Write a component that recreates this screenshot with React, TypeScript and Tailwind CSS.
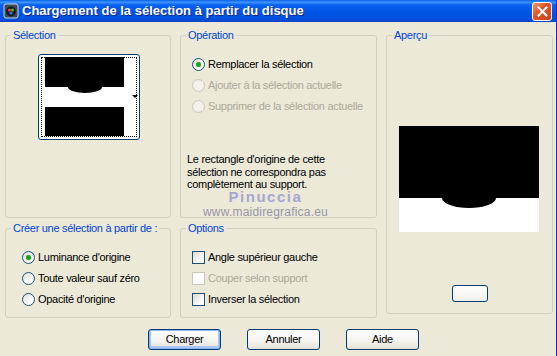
import React from "react";

const Radio: React.FC<{ checked?: boolean; disabled?: boolean; label: string }> = ({
  checked,
  disabled,
  label,
}) => (
  <div className="flex items-center h-[21px]">
    <span
      className={`w-[13px] h-[13px] rounded-full border flex items-center justify-center ${
        disabled
          ? "border-[#CAC8BB] bg-[#F2F1EA]"
          : "border-[#1C5180] bg-[linear-gradient(135deg,#DCDBD2_0%,#FFFFFF_70%)]"
      }`}
    >
      {checked && <span className="w-[5px] h-[5px] rounded-full bg-[#21A121] shadow-[0_0_1px_#5BD75B]" />}
    </span>
    <span className={`ml-[3px] ${disabled ? "text-[#ACA899]" : "text-black"}`}>{label}</span>
  </div>
);

const Check: React.FC<{ disabled?: boolean; label: string }> = ({ disabled, label }) => (
  <div className="flex items-center h-[21px]">
    <span
      className={`w-[13px] h-[13px] border ${
        disabled
          ? "border-[#CAC8BB] bg-white"
          : "border-[#1C5180] bg-[linear-gradient(135deg,#DCDBD2_0%,#FFFFFF_80%)]"
      }`}
    />
    <span className={`ml-[3px] ${disabled ? "text-[#ACA899]" : "text-black"}`}>{label}</span>
  </div>
);

const Group: React.FC<{ title: string; className?: string; children?: React.ReactNode }> = ({
  title,
  className,
  children,
}) => (
  <fieldset className={`border border-[#D0D0BF] rounded-[3px] min-w-0 ${className ?? ""}`}>
    <legend className="ml-[5px] px-[2px] text-[#0046D5] leading-[13px]">{title}</legend>
    {children}
  </fieldset>
);

const XpButton: React.FC<{ label: string; focused?: boolean }> = ({ label, focused }) => (
  <button
    className={`w-[73px] h-[21px] rounded-[3px] border border-[#003C74] bg-[linear-gradient(to_bottom,#FFFFFF_0%,#F4F3EE_60%,#E3E1D6_100%)] text-black leading-none ${
      focused ? "shadow-[inset_0_0_0_1px_#8CB4F2,inset_0_-1px_0_2px_#A9C6F5]" : ""
    }`}
  >
    {label}
  </button>
);

export default function App() {
  return (
    <div className="w-[557px] h-[356px] bg-[#ECE9D8] border-r border-[#0831D9] font-['Liberation_Sans',Arial,sans-serif] text-[11px] tracking-[-0.3px] overflow-hidden">
      {/* Title bar */}
      <div className="h-[22px] flex items-center bg-[linear-gradient(to_bottom,#0A5FE8_0%,#3D95FF_10%,#0B62F0_22%,#0054E3_60%,#0050DC_88%,#003FC0_100%)]">
        <svg className="ml-[3px] w-[16px] h-[16px]" viewBox="0 0 16 16">
          <rect x="1" y="1" width="14" height="14" rx="2" fill="#3A4A5A" stroke="#C8D4E0" strokeWidth="1" />
          <circle cx="8" cy="8.5" r="5" fill="#1A1A1A" />
          <circle cx="6.5" cy="7" r="1.6" fill="#E04040" />
          <circle cx="9.5" cy="7" r="1.6" fill="#40B040" />
          <circle cx="8" cy="10" r="1.6" fill="#4070E0" />
        </svg>
        <span className="ml-[3px] text-white font-bold text-[13px] tracking-[0px] [text-shadow:1px_1px_0_#0A2A8A]">
          Chargement de la sélection à partir du disque
        </span>
        <div className="ml-auto mr-[4px] w-[20px] h-[19px] rounded-[3px] border border-white bg-[linear-gradient(135deg,#F09A7A_0%,#E2552B_40%,#C8401A_100%)] flex items-center justify-center">
          <svg width="11" height="11" viewBox="0 0 11 11">
            <path d="M1.5 1.5 L9.5 9.5 M9.5 1.5 L1.5 9.5" stroke="white" strokeWidth="2" strokeLinecap="square" />
          </svg>
        </div>
      </div>

      {/* Body */}
      <div className="pt-[7px] pl-[5px] grid grid-cols-[166px_197px_167px] grid-rows-[189px_96px] gap-x-[9px] gap-y-[4px]">
        <Group title="Sélection">
          <div className="flex justify-center mt-[12px] pl-[2px]">
            <div className="relative w-[102px] h-[86px] rounded-[3px] border border-[#003C74] bg-white">
              <div className="absolute inset-[2px] border border-dotted border-black" />
              <svg className="absolute left-[6px] top-[2px]" width="79" height="79" viewBox="0 0 79 79">
                <rect x="0" y="0" width="79" height="30" fill="black" />
                <ellipse cx="40" cy="30" rx="17" ry="6" fill="black" />
                <rect x="0" y="50" width="79" height="29" fill="black" />
              </svg>
              <svg className="absolute left-[93px] top-[40px]" width="6" height="4" viewBox="0 0 6 4">
                <path d="M0 0 L6 0 L3 3 Z" fill="black" />
              </svg>
            </div>
          </div>
        </Group>

        <Group title="Opération" className="relative">
          <div className="pl-[11px] mt-[12px] flex flex-col">
            <Radio checked label="Remplacer la sélection" />
            <Radio disabled label="Ajouter à la sélection actuelle" />
            <Radio disabled label="Supprimer de la sélection actuelle" />
          </div>
          <p className="pl-[6px] mt-[36px] leading-[12.5px] text-black w-[160px]">
            Le rectangle d'origine de cette sélection ne correspondra pas complètement au support.
          </p>
          <div className="absolute left-[22px] top-[147px] flex flex-col items-center pointer-events-none">
            <span className="text-[15px] font-bold tracking-[1.5px] text-[#A9A7C7] leading-[16px] [text-shadow:1px_1px_0_#E8E6F0]">
              Pinuccia
            </span>
            <span className="text-[12px] tracking-[0.2px] text-[#9896A8] leading-[14px]">
              www.maidiregrafica.eu
            </span>
          </div>
        </Group>

        <Group title="Aperçu" className="row-span-2 h-[285px]">
          <div className="flex flex-col items-center">
            <svg className="mt-[84px] ml-[-1px]" width="140" height="106" viewBox="0 0 140 106">
              <rect x="0" y="0" width="140" height="106" fill="white" />
              <rect x="0" y="0" width="140" height="72" fill="black" />
              <ellipse cx="70" cy="72" rx="27" ry="10" fill="black" />
            </svg>
            <div className="mt-[53px] w-[36px] h-[17px] rounded-[3px] border border-[#003C74] bg-[linear-gradient(to_bottom,#FFFFFF_0%,#F0EFEA_100%)]" />
          </div>
        </Group>

        <Group title="Créer une sélection à partir de :">
          <div className="pl-[16px] mt-[12px] flex flex-col">
            <Radio checked label="Luminance d'origine" />
            <Radio label="Toute valeur sauf zéro" />
            <Radio label="Opacité d'origine" />
          </div>
        </Group>

        <Group title="Options">
          <div className="pl-[11px] mt-[12px] flex flex-col">
            <Check label="Angle supérieur gauche" />
            <Check disabled label="Couper selon support" />
            <Check label="Inverser la sélection" />
          </div>
        </Group>
      </div>

      {/* Buttons */}
      <div className="mt-[11px] pl-[148px] flex gap-[26px]">
        <XpButton label="Charger" focused />
        <XpButton label="Annuler" />
        <XpButton label="Aide" />
      </div>
    </div>
  );
}
